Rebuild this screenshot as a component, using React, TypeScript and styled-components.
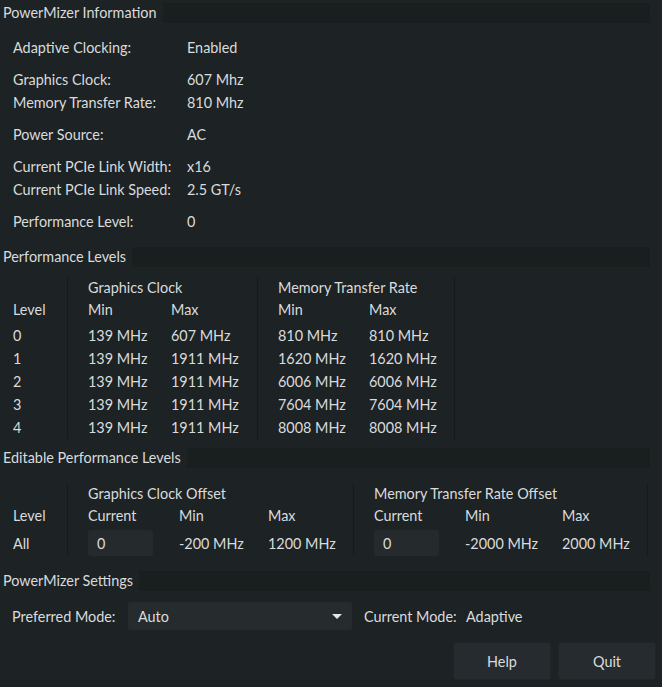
import React from 'react';
import styled, { createGlobalStyle } from 'styled-components';

const GlobalStyle = createGlobalStyle`
  html, body { margin: 0; padding: 0; background: #1d2224; }
  body {
    font-family: Lato, "Liberation Sans", sans-serif;
    font-size: 14.4px;
    color: #d9dbdc;
  }
  * { box-sizing: border-box; }
`;

const Window = styled.div`
  width: 662px;
  height: 687px;
  display: flex;
  flex-direction: column;
  padding-top: 3px;
  background: #1d2224;
  overflow: hidden;
`;

const Section = styled.section<{ $after: number }>`
  margin-bottom: ${(p) => p.$after}px;
`;

const SectionHeader = styled.div`
  display: flex;
  height: 20px;
  margin-right: 12px;
`;

const SectionTitle = styled.div`
  padding: 0 6px 0 3px;
  line-height: 19px;
  white-space: nowrap;
`;

const HeaderFill = styled.div`
  flex: 1;
  background: #191e1f;
`;

const InfoBody = styled.div`
  padding: 13px 0 0 13px;
`;

const InfoGroup = styled.div`
  & + & { margin-top: 9px; }
`;

const InfoRow = styled.div`
  display: grid;
  grid-template-columns: 174px 1fr;
  height: 23px;
  align-items: center;
  white-space: nowrap;
`;

const TableBody = styled.div<{ $top: number }>`
  display: flex;
  margin-top: ${(p) => p.$top}px;
`;

const Group = styled.div<{ $width: number; $pad: number }>`
  width: ${(p) => p.$width}px;
  padding-left: ${(p) => p.$pad}px;
  border-right: 1px solid #161a1c;
  display: flex;
  flex-direction: column;
`;

const GroupTitle = styled.div`
  height: 21px;
  line-height: 21px;
  white-space: nowrap;
`;

const SubColumns = styled.div`
  display: flex;
`;

const Column = styled.div<{ $width?: number }>`
  ${(p) => (p.$width ? `width: ${p.$width}px;` : 'flex: 1;')}
  display: flex;
  flex-direction: column;
`;

const HeadCell = styled.div`
  height: 23px;
  line-height: 23px;
  white-space: nowrap;
`;

const DataStack = styled.div`
  margin-top: 3px;
  display: flex;
  flex-direction: column;
`;

const DataCell = styled.div<{ $h?: number }>`
  height: ${(p) => p.$h ?? 23}px;
  display: flex;
  align-items: center;
  white-space: nowrap;
`;

const NumberInput = styled.div`
  width: 65px;
  height: 26px;
  background: #252a2d;
  border-radius: 3px;
  padding-left: 9px;
  display: flex;
  align-items: center;
`;

const SettingsRow = styled.div`
  display: flex;
  align-items: center;
  height: 28px;
  margin-top: 11px;
  padding-left: 12px;
`;

const SettingLabel = styled.div<{ $width: number }>`
  width: ${(p) => p.$width}px;
  white-space: nowrap;
`;

const Combo = styled.div`
  width: 224px;
  height: 28px;
  background: #262b2e;
  border-radius: 3px;
  display: flex;
  align-items: center;
  justify-content: space-between;
  padding: 0 10px 0 10px;
  margin-right: 12px;
`;

const Arrow = styled.svg`
  width: 10px;
  height: 5px;
  display: block;
`;

const ButtonBar = styled.div`
  display: flex;
  justify-content: flex-end;
  gap: 7px;
  padding-right: 6px;
  margin-top: 12px;
`;

const Button = styled.button`
  width: 98px;
  height: 38px;
  background: #262b2f;
  border: 1px solid #202528;
  border-radius: 3px;
  color: #d9dbdc;
  font: inherit;
  padding: 0;
`;

const perfRows = [
  ['0', '139 MHz', '607 MHz', '810 MHz', '810 MHz'],
  ['1', '139 MHz', '1911 MHz', '1620 MHz', '1620 MHz'],
  ['2', '139 MHz', '1911 MHz', '6006 MHz', '6006 MHz'],
  ['3', '139 MHz', '1911 MHz', '7604 MHz', '7604 MHz'],
  ['4', '139 MHz', '1911 MHz', '8008 MHz', '8008 MHz'],
];

const infoGroups: [string, string][][] = [
  [['Adaptive Clocking:', 'Enabled']],
  [
    ['Graphics Clock:', '607 Mhz'],
    ['Memory Transfer Rate:', '810 Mhz'],
  ],
  [['Power Source:', 'AC']],
  [
    ['Current PCIe Link Width:', 'x16'],
    ['Current PCIe Link Speed:', '2.5 GT/s'],
  ],
  [['Performance Level:', '0']],
];

const Header = ({ title }: { title: string }) => (
  <SectionHeader>
    <SectionTitle>{title}</SectionTitle>
    <HeaderFill />
  </SectionHeader>
);

const DataColumn = ({ head, values, width }: { head: string; values: string[]; width?: number }) => (
  <Column $width={width}>
    <HeadCell>{head}</HeadCell>
    <DataStack>
      {values.map((v, i) => (
        <DataCell key={i}>{v}</DataCell>
      ))}
    </DataStack>
  </Column>
);

const OffsetGroup = ({
  title,
  width,
  min,
  max,
  minWidth,
}: {
  title: string;
  width: number;
  min: string;
  max: string;
  minWidth: number;
}) => (
  <Group $width={width} $pad={20}>
    <GroupTitle>{title}</GroupTitle>
    <SubColumns>
      <Column $width={91}>
        <HeadCell>Current</HeadCell>
        <DataStack>
          <DataCell $h={26}>
            <NumberInput>0</NumberInput>
          </DataCell>
        </DataStack>
      </Column>
      <Column $width={minWidth}>
        <HeadCell>Min</HeadCell>
        <DataStack>
          <DataCell $h={26}>{min}</DataCell>
        </DataStack>
      </Column>
      <Column>
        <HeadCell>Max</HeadCell>
        <DataStack>
          <DataCell $h={26}>{max}</DataCell>
        </DataStack>
      </Column>
    </SubColumns>
  </Group>
);

export default function App() {
  return (
    <>
      <GlobalStyle />
      <Window>
        <Section $after={14}>
          <Header title="PowerMizer Information" />
          <InfoBody>
            {infoGroups.map((g, gi) => (
              <InfoGroup key={gi}>
                {g.map(([k, v]) => (
                  <InfoRow key={k}>
                    <span>{k}</span>
                    <span>{v}</span>
                  </InfoRow>
                ))}
              </InfoGroup>
            ))}
          </InfoBody>
        </Section>

        <Section $after={9}>
          <Header title="Performance Levels" />
          <TableBody $top={10}>
            <Group $width={68} $pad={13}>
              <GroupTitle />
              <DataColumn head="Level" values={perfRows.map((r) => r[0])} />
            </Group>
            <Group $width={190} $pad={20}>
              <GroupTitle>Graphics Clock</GroupTitle>
              <SubColumns>
                <DataColumn head="Min" width={83} values={perfRows.map((r) => r[1])} />
                <DataColumn head="Max" values={perfRows.map((r) => r[2])} />
              </SubColumns>
            </Group>
            <Group $width={197} $pad={20}>
              <GroupTitle>Memory Transfer Rate</GroupTitle>
              <SubColumns>
                <DataColumn head="Min" width={91} values={perfRows.map((r) => r[3])} />
                <DataColumn head="Max" values={perfRows.map((r) => r[4])} />
              </SubColumns>
            </Group>
          </TableBody>
        </Section>

        <Section $after={15}>
          <Header title="Editable Performance Levels" />
          <TableBody $top={15}>
            <Group $width={68} $pad={13}>
              <GroupTitle />
              <HeadCell>Level</HeadCell>
              <DataStack>
                <DataCell $h={26}>All</DataCell>
              </DataStack>
            </Group>
            <OffsetGroup title="Graphics Clock Offset" width={286} min="-200 MHz" max="1200 MHz" minWidth={89} />
            <OffsetGroup title="Memory Transfer Rate Offset" width={294} min="-2000 MHz" max="2000 MHz" minWidth={97} />
          </TableBody>
        </Section>

        <Section $after={0}>
          <Header title="PowerMizer Settings" />
          <SettingsRow>
            <SettingLabel $width={116}>Preferred Mode:</SettingLabel>
            <Combo>
              <span>Auto</span>
              <Arrow viewBox="0 0 10 5">
                <path d="M0 0 L10 0 L5 5 Z" fill="#e4e6e7" />
              </Arrow>
            </Combo>
            <SettingLabel $width={102}>Current Mode:</SettingLabel>
            <span>Adaptive</span>
          </SettingsRow>
        </Section>

        <ButtonBar>
          <Button>Help</Button>
          <Button>Quit</Button>
        </ButtonBar>
      </Window>
    </>
  );
}
